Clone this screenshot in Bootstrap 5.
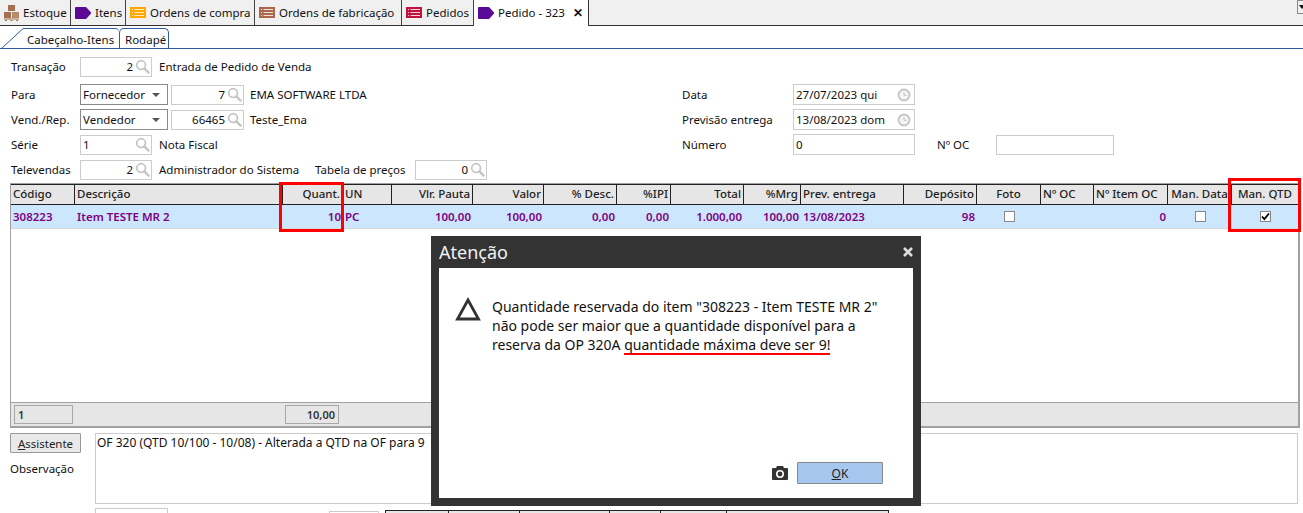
<!DOCTYPE html>
<html lang="pt-BR">
<head>
  <meta charset="UTF-8" />
  <title>Pedido - 323</title>
  <meta name="viewport" content="width=device-width, initial-scale=1">
  <link href="https://cdn.jsdelivr.net/npm/bootstrap@5.3.3/dist/css/bootstrap.min.css" rel="stylesheet">
  <style>
    html, body { height: 513px; overflow: hidden; }
    body { font-family: "Noto Sans", "Liberation Sans", sans-serif; font-size: 11.5px; line-height: 16px; color: #111; background: #fff; }
    .page-wrap { position: relative; width: 1303px; height: 513px; overflow: hidden; }

    /* top tabs */
    .main-tabs { height: 26px; background: #f0f0f0; border-bottom: 1px solid #333; }
    .main-tab { height: 25px; padding-left: 4px; gap: 4px; border-right: 1px solid #444; white-space: nowrap; flex: none; }
    .main-tab.active { background: #fff; height: 26px; border-right: 1px solid #333; }
    .tw-1 { width: 71px; } .tw-2 { width: 55px; } .tw-3 { width: 129px; }
    .tw-4 { width: 147px; } .tw-5 { width: 72px; } .tw-6 { width: 115px; }
    .tab-x { font-size: 12px; font-weight: 700; margin-left: 4px; }
    .tab-arrow { position: relative; margin-left: auto; width: 6px; height: 14px; border: 1px solid #888; border-right: 0; }
    .tab-arrow::after { content: ""; position: absolute; left: 1px; top: 4px; border-left: 3px solid transparent; border-right: 3px solid transparent; border-top: 4px solid #111; }
    .c-orange { color: #ffa800; } .c-brown { color: #a8694a; } .c-red { color: #c2103f; }

    /* sub tabs */
    .sub-tabs { height: 23px; border-bottom: 1px solid #2f5b9f; padding-left: 25px; position: relative; }
    .sub-tab { height: 20px; margin-top: 2px; padding: 3px 0 0 5px; border: 1px solid #2f5b9f; border-bottom: 0; border-radius: 5px 5px 0 0; background: #fff; white-space: nowrap; width: 50px; }
    .sub-tab.first { width: 94px; border-left: 0; border-right: 0; border-radius: 0 4px 0 0; padding-left: 2px; }
    .sub-slant { position: absolute; left: 0; top: 0; }

    /* header form */
    .form-area { height: 134px; padding: 5px 0 0 11px; }
    .left-form { width: 671px; flex: none; }
    .right-form { padding-top: 28px; }
    .f-row { height: 25px; white-space: nowrap; }
    .row-first { margin-bottom: 3px; }
    .f-label { width: 69px; flex: none; }
    .r-label { width: 111px; flex: none; }
    .f-box { height: 20px; border: 1px solid #ccc; background: #fff; padding: 0 1px 0 2px; display: flex; align-items: center; flex: none; }
    .f-box .val { flex: 1; text-align: right; }
    .f-box .val-l { flex: 1; text-align: left; }
    .f-box svg { margin-left: 2px; flex: none; }
    .f-combo { border-color: #8a8a8a; width: 88px; height: 21px; }
    .f-caret { width: 0; height: 0; border-left: 4px solid transparent; border-right: 4px solid transparent; border-top: 4px solid #555; margin-right: 6px; }
    .w-lookup { width: 72px; }
    .w-lookup2 { width: 73px; margin-left: 3px; }
    .w-date { width: 122px; height: 21px; padding-right: 3px; }
    .name-a { margin-left: 7px; }
    .name-b { margin-left: 6px; }
    .name-adm { margin-left: 7px; width: 156px; }
    .tbl-label { width: 100px; }
    .oc-label { margin-left: 22px; width: 59px; }
    .oc-box { width: 118px; }

    /* grid */
    .grid-wrap { margin-left: 10px; width: 1290px; height: 245px; border: 1px solid #a0a0a0; border-width: 1px 2px 2px 1px; display: flex; flex-direction: column; }
    .g-head, .g-row { display: flex; }
    .g-head { height: 21px; background: #e6e6e6; border-top: 1px solid #222; border-bottom: 1px solid #222; color: #222; font-weight: 500; flex: none; }
    .g-row { height: 24px; background: #cbe6fd; color: #800080; font-weight: 600; border-bottom: 1px solid #d8d8d8; line-height: 23px; flex: none; }
    .g-head > div { border-right: 1px solid #222; padding: 1px 2px 0; white-space: nowrap; overflow: hidden; flex: none; }
    .g-row > div { padding: 0 2px; white-space: nowrap; overflow: hidden; flex: none; }
    .g-head > div:last-child { border-right: 0; }
    .t-r { text-align: right; }
    .t-c { text-align: center; }
    .g-body { flex: 1; background: #fff; }
    .g-foot { height: 24px; flex: none; background: #e6e6e6; border-top: 1px solid #a0a0a0; display: flex; align-items: center; padding-left: 3px; font-size: 11px; font-weight: 600; color: #333; }
    .foot-cell { height: 19px; border: 1px solid #a8a8a8; line-height: 17px; padding: 0 3px; flex: none; }
    .foot-a { width: 59px; }
    .foot-b { width: 54px; margin-left: 212px; }
    .chk { display: inline-block; width: 11px; height: 11px; border: 1px solid #888; background: #fff; vertical-align: -1px; }

    /* bottom */
    .obs-area { height: 80px; padding: 5px 0 0 10px; }
    .btn-assist { display: block; width: 71px; height: 20px; padding: 0; font-size: 11.5px; line-height: 17px; color: #222; background: #e9e9e9; border: 1px solid #999; border-radius: 1px; }
    .obs-left { width: 71px; flex: none; }
    .obs-label { margin-top: 8px; }
    .obs-box { width: 1203px; height: 71px; border: 1px solid #ccc; margin-left: 14px; padding: 1px 0 0 1px; font-size: 12px; flex: none; }
    .strip-box { flex: none; height: 8px; border: 1px solid #ccc; border-bottom: 0; }
    .strip-a { width: 73px; margin-left: 95px; }
    .strip-b { width: 50px; margin-left: 161px; margin-top: 3px; }
    .strip-grid { margin-left: 6px; margin-top: 2px; border-top: 1px solid #222; }
    .strip-grid > div { height: 8px; border-left: 1px solid #222; background: #e6e6e6; flex: none; }
    .strip-grid > div:last-child { border-right: 1px solid #222; }

    /* dialog over content */
    .atn-dialog { position: absolute; left: 431px; top: 236px; width: 490px; height: 270px; background: #333; padding: 0 8px 8px; display: flex; flex-direction: column; }
    .atn-title { height: 32px; flex: none; color: #f2f2f2; font-size: 18px; line-height: 33px; display: flex; justify-content: space-between; align-items: center; }
    .atn-body { flex: 1; background: #fff; position: relative; padding: 29px 20px 0 53px; font-size: 14px; line-height: 19px; color: #111; white-space: nowrap; }
    .atn-tri { position: absolute; left: 16px; top: 29px; }
    .red-under { display: inline-block; line-height: 17px; border-bottom: 2px solid #f00; }
    .atn-actions { position: absolute; right: 30px; bottom: 14px; gap: 9px; }
    .btn-ok { width: 86px; height: 22px; padding: 0; font-size: 12px; line-height: 19px; background: #a6c8ef; border: 1px solid #888; border-radius: 1px; color: #222; }

    /* red marks drawn over the grid */
    .red-mark { position: absolute; border: 3px solid #f00; pointer-events: none; }
    .mark-qty { left: 279px; top: 182px; width: 65px; height: 50px; }
    .mark-man { left: 1228px; top: 178px; width: 73px; height: 54px; }
  </style>
</head>
<body>
  <div class="page-wrap">
    <svg width="0" height="0" class="position-absolute">
      <symbol id="ic-search" viewBox="0 0 16 16"><circle cx="6.5" cy="6.5" r="4.7" fill="none" stroke="#c4c4c4" stroke-width="1.8"/><path d="M10 10l4.5 4.5" stroke="#c4c4c4" stroke-width="2.4" stroke-linecap="round"/></symbol>
      <symbol id="ic-clock" viewBox="0 0 14 14"><circle cx="7" cy="7" r="5.5" fill="#f4f4f4" stroke="#c4c4c4" stroke-width="1.8"/><path d="M7 4v3.3h2.3" fill="none" stroke="#c4c4c4"/></symbol>
      <symbol id="ic-tag" viewBox="0 0 16 12"><path d="M1 0h9.5q.6 0 1 .5l4.3 4.7q.7.8 0 1.6l-4.3 4.7q-.4.5-1 .5H1q-1 0-1-1V1q0-1 1-1z" fill="#5a0a96"/></symbol>
      <symbol id="ic-list" viewBox="0 0 16 11"><rect width="16" height="11" fill="currentColor"/><path d="M2 2.5h1M2 5.5h1M2 8.5h1M4.5 2.5h9.5M4.5 5.5h9.5M4.5 8.5h9.5" stroke="#fff" stroke-opacity=".8"/></symbol>
    </svg>

    <div class="main-tabs d-flex">
      <div class="main-tab tw-1 d-flex align-items-center">
        <svg width="15" height="16" viewBox="0 0 15 16"><rect x="4" y="0" width="7" height="6" fill="#a5704f"/><rect x="0" y="7" width="7" height="6" fill="#a5704f"/><rect x="8" y="7" width="7" height="6" fill="#b98a68"/><path d="M0 14h15M1 15.5h2M6.5 15.5h2M12 15.5h2" stroke="#a5704f"/></svg>
        <span>Estoque</span>
      </div>
      <div class="main-tab tw-2 d-flex align-items-center">
        <svg width="16" height="12"><use href="#ic-tag"/></svg>
        <span>Itens</span>
      </div>
      <div class="main-tab tw-3 d-flex align-items-center">
        <svg width="16" height="11" class="c-orange"><use href="#ic-list"/></svg>
        <span>Ordens de compra</span>
      </div>
      <div class="main-tab tw-4 d-flex align-items-center">
        <svg width="16" height="11" class="c-brown"><use href="#ic-list"/></svg>
        <span>Ordens de fabricação</span>
      </div>
      <div class="main-tab tw-5 d-flex align-items-center">
        <svg width="16" height="11" class="c-red"><use href="#ic-list"/></svg>
        <span>Pedidos</span>
      </div>
      <div class="main-tab tw-6 active d-flex align-items-center">
        <svg width="16" height="12"><use href="#ic-tag"/></svg>
        <span>Pedido - 323</span>
        <span class="tab-x">✕</span>
      </div>
      <div class="tab-arrow"></div>
    </div>

    <div class="sub-tabs d-flex">
      <svg class="sub-slant" width="26" height="23" viewBox="0 0 26 23"><path d="M0 22.5h1.500L22 3.500q1-1 2-1h2" fill="none" stroke="#2f5b9f"/></svg>
      <div class="sub-tab first">Cabeçalho-Itens</div>
      <div class="sub-tab">Rodapé</div>
    </div>

    <div class="form-area d-flex">
      <div class="left-form">
        <div class="f-row row-first d-flex align-items-center">
          <span class="f-label">Transação</span>
          <div class="f-box w-lookup"><span class="val">2</span><svg width="15" height="15"><use href="#ic-search"/></svg></div>
          <span class="name-a">Entrada de Pedido de Venda</span>
        </div>
        <div class="f-row d-flex align-items-center">
          <span class="f-label">Para</span>
          <div class="f-box f-combo"><span class="val-l">Fornecedor</span><span class="f-caret"></span></div>
          <div class="f-box w-lookup2"><span class="val">7</span><svg width="15" height="15"><use href="#ic-search"/></svg></div>
          <span class="name-b">EMA SOFTWARE LTDA</span>
        </div>
        <div class="f-row d-flex align-items-center">
          <span class="f-label">Vend./Rep.</span>
          <div class="f-box f-combo"><span class="val-l">Vendedor</span><span class="f-caret"></span></div>
          <div class="f-box w-lookup2"><span class="val">66465</span><svg width="15" height="15"><use href="#ic-search"/></svg></div>
          <span class="name-b">Teste_Ema</span>
        </div>
        <div class="f-row d-flex align-items-center">
          <span class="f-label">Série</span>
          <div class="f-box w-lookup"><span class="val-l">1</span><svg width="15" height="15"><use href="#ic-search"/></svg></div>
          <span class="name-a">Nota Fiscal</span>
        </div>
        <div class="f-row d-flex align-items-center">
          <span class="f-label">Televendas</span>
          <div class="f-box w-lookup"><span class="val">2</span><svg width="15" height="15"><use href="#ic-search"/></svg></div>
          <span class="name-adm">Administrador do Sistema</span>
          <span class="tbl-label">Tabela de preços</span>
          <div class="f-box w-lookup"><span class="val">0</span><svg width="15" height="15"><use href="#ic-search"/></svg></div>
        </div>
      </div>
      <div class="right-form">
        <div class="f-row d-flex align-items-center">
          <span class="r-label">Data</span>
          <div class="f-box w-date"><span class="val-l">27/07/2023 qui</span><svg width="14" height="14"><use href="#ic-clock"/></svg></div>
        </div>
        <div class="f-row d-flex align-items-center">
          <span class="r-label">Previsão entrega</span>
          <div class="f-box w-date"><span class="val-l">13/08/2023 dom</span><svg width="14" height="14"><use href="#ic-clock"/></svg></div>
        </div>
        <div class="f-row d-flex align-items-center">
          <span class="r-label">Número</span>
          <div class="f-box w-date"><span class="val-l">0</span></div>
          <span class="oc-label">Nº OC</span>
          <div class="f-box oc-box"></div>
        </div>
      </div>
    </div>

    <div class="grid-wrap">
      <div class="g-head" id="gridHead"></div>
      <div class="g-row" id="gridRow"></div>
      <div class="g-body"></div>
      <div class="g-foot">
        <div class="foot-cell foot-a">1</div>
        <div class="foot-cell foot-b t-r">10,00</div>
      </div>
    </div>

    <div class="obs-area d-flex">
      <div class="obs-left">
        <button type="button" class="btn btn-assist"><u>A</u>ssistente</button>
        <div class="obs-label">Observação</div>
      </div>
      <div class="obs-box">OF 320 (QTD 10/100 - 10/08) - Alterada a QTD na OF para 9</div>
    </div>

    <div class="d-flex">
      <div class="strip-box strip-a"></div>
      <div class="strip-box strip-b"></div>
      <div class="strip-grid d-flex" id="stripGrid"></div>
    </div>

    <div class="red-mark mark-qty"></div>
    <div class="red-mark mark-man"></div>

    <div class="atn-dialog">
      <div class="atn-title"><span>Atenção</span>
        <svg width="10" height="10" viewBox="0 0 10 10"><path d="M1 1l8 8M9 1l-8 8" stroke="#ddd" stroke-width="2.600"/></svg>
      </div>
      <div class="atn-body">
        <svg class="atn-tri" width="26" height="24" viewBox="0 0 26 24"><path d="M13 3L2.500 22h21z" fill="none" stroke="#333" stroke-width="2.800"/></svg>
        Quantidade reservada do item "308223 - Item TESTE MR 2"<br>
        não pode ser maior que a quantidade disponível para a<br>
        reserva da OP 320A <span class="red-under">quantidade máxima deve ser 9!</span>
        <div class="atn-actions d-flex align-items-center">
          <svg width="16" height="14" viewBox="0 0 16 14"><path d="M1 2h3l1-2h6l1 2h3a1 1 0 0 1 1 1v10a1 1 0 0 1-1 1H1a1 1 0 0 1-1-1V3a1 1 0 0 1 1-1z" fill="#333"/><circle cx="8" cy="8" r="3.200" fill="none" stroke="#fff" stroke-width="1.600"/></svg>
          <button type="button" class="btn btn-ok"><u>O</u>K</button>
        </div>
      </div>
    </div>
  </div>

  <script>
    // grid columns: label, row value, width, row align, head align
    const cols = [
      ["Código", "308223", 64, "", ""],
      ["Descrição", "Item TESTE MR 2", 208, "", ""],
      ["Quant.", "10", 60, "t-r", "t-r"],
      ["UN", "PC", 49, "", ""],
      ["Vlr. Pauta", "100,00", 81, "t-r", "t-r"],
      ["Valor", "100,00", 71, "t-r", "t-r"],
      ["% Desc.", "0,00", 73, "t-r", "t-r"],
      ["%IPI", "0,00", 54, "t-r", "t-r"],
      ["Total", "1.000,00", 73, "t-r", "t-r"],
      ["%Mrg", "100,00", 57, "t-r", "t-r"],
      ["Prev. entrega", "13/08/2023", 103, "", ""],
      ["Depósito", "98", 73, "t-r", "t-r"],
      ["Foto", "chk", 64, "t-c", "t-c"],
      ["Nº OC", "", 53, "", ""],
      ["Nº Item OC", "0", 74, "t-r", ""],
      ["Man. Data", "chk", 64, "t-c", "t-c"],
      ["Man. QTD", "chkon", 66, "t-c", "t-c"]
    ];
    const head = document.getElementById("gridHead");
    const row = document.getElementById("gridRow");
    cols.forEach(c => {
      const h = document.createElement("div");
      h.className = c[4];
      h.style.width = c[2] + "px";
      h.textContent = c[0];
      head.appendChild(h);
      const r = document.createElement("div");
      r.className = c[3];
      r.style.width = c[2] + "px";
      if (c[1] === "chk") r.innerHTML = '<span class="chk"></span>';
      else if (c[1] === "chkon") r.innerHTML = '<span class="chk"><svg width="9" height="9" viewBox="0 0 9 9" class="d-block"><path d="M1 4.500l2.300 2.600L8 1.500" fill="none" stroke="#000" stroke-width="1.800"/></svg></span>';
      else r.textContent = c[1];
      row.appendChild(r);
    });

    // the next grid down the page, only its top edge shows
    const strip = document.getElementById("stripGrid");
    [63, 71, 90, 51, 66, 163].forEach(w => {
      const d = document.createElement("div");
      d.style.width = w + "px";
      strip.appendChild(d);
    });
  </script>
</body>
</html>
